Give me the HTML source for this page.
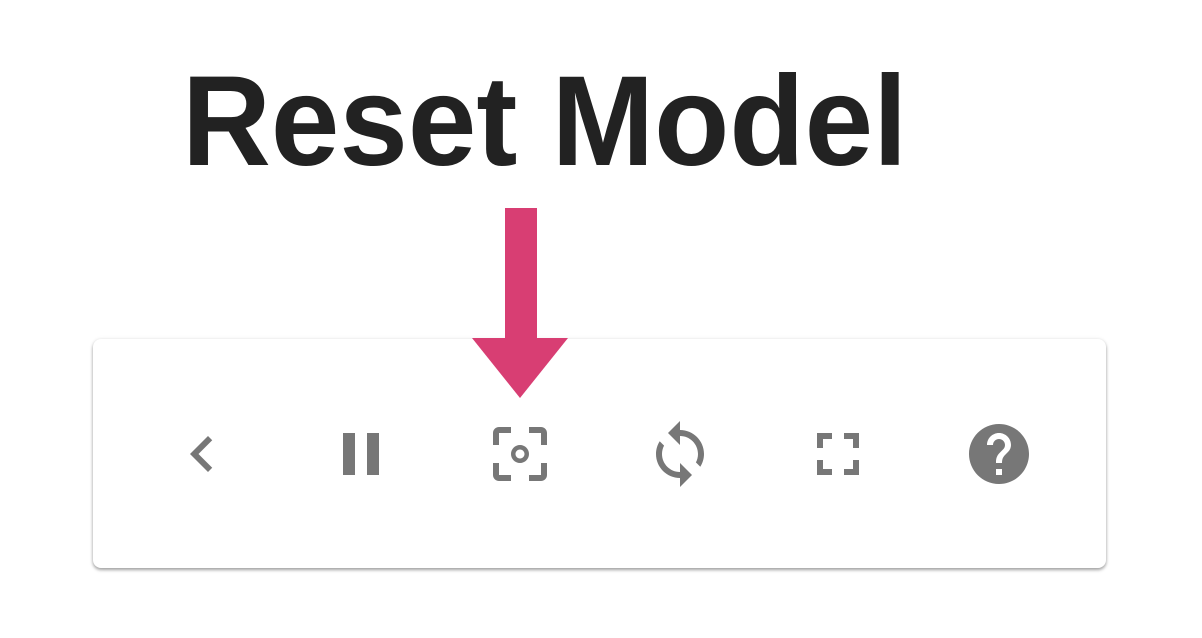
<!DOCTYPE html><html><head><style>
body{margin:0;width:1202px;height:638px;background:#fff;position:relative;overflow:hidden;font-family:"Liberation Sans",sans-serif}
.t{position:absolute;left:182px;top:45px;font-size:128px;font-weight:bold;color:#222;transform:scaleX(0.962);transform-origin:left top;line-height:1.2;white-space:nowrap}
.card{position:absolute;left:93px;top:339px;width:1013px;height:229px;border-radius:8px;background:#fff;box-shadow:0 2px 3px rgba(0,0,0,.35),0 0 4px rgba(0,0,0,.08)}
svg.i{position:absolute;top:418px;width:72px;height:72px;fill:#777}
</style></head><body>
<div class="t">Reset Model</div>
<div class="card"></div>
<svg width="1202" height="638" style="position:absolute;left:0;top:0">
<rect x="505" y="208" width="32" height="135" fill="#d83e73"/>
<polygon points="472,338 568,338 520,398" fill="#d83e73"/>
</svg>
<svg class="i" style="left:166px" viewBox="0 0 24 24"><path d="M15.41 7.41L14 6l-6 6 6 6 1.41-1.41L10.83 12z"/></svg>
<svg class="i" style="left:325px" viewBox="0 0 24 24"><path d="M6 19h4V5H6v14zm8-14v14h4V5h-4z"/></svg>
<svg class="i" style="left:484px" viewBox="0 0 24 24"><path d="M5 15H3v4c0 1.1.9 2 2 2h4v-2H5v-4zM5 5h4V3H5c-1.1 0-2 .9-2 2v4h2V5zm14-2h-4v2h4v4h2V5c0-1.1-.9-2-2-2zm0 16h-4v2h4c1.1 0 2-.9 2-2v-4h-2v4zM12 9c-1.66 0-3 1.34-3 3s1.34 3 3 3 3-1.34 3-3-1.34-3-3-3zm0 4.5c-.83 0-1.5-.67-1.5-1.5s.67-1.5 1.5-1.5 1.5.67 1.5 1.5-.67 1.5-1.5 1.5z"/></svg>
<svg class="i" style="left:644px" viewBox="0 0 24 24"><path d="M12 4V1L8 5l4 4V6c3.31 0 6 2.69 6 6 0 1.01-.25 1.97-.7 2.8l1.46 1.46C19.54 15.03 20 13.57 20 12c0-4.42-3.58-8-8-8zm0 14c-3.31 0-6-2.69-6-6 0-1.01.25-1.97.7-2.8L5.24 7.74C4.46 8.97 4 10.43 4 12c0 4.42 3.58 8 8 8v3l4-4-4-4v3z"/></svg>
<svg class="i" style="left:802px" viewBox="0 0 24 24"><path d="M7 14H5v5h5v-2H7v-3zm-2-4h2V7h3V5H5v5zm12 7h-3v2h5v-5h-2v3zM14 5v2h3v3h2V5h-5z"/></svg>
<svg class="i" style="left:963px" viewBox="0 0 24 24"><path d="M12 2C6.48 2 2 6.48 2 12s4.48 10 10 10 10-4.48 10-10S17.52 2 12 2zm1 17h-2v-2h2v2zm2.07-7.75l-.9.92C13.45 12.9 13 13.5 13 15h-2v-.5c0-1.1.45-2.1 1.17-2.83l1.24-1.26c.37-.36.59-.86.59-1.41 0-1.1-.9-2-2-2s-2 .9-2 2H8c0-2.21 1.79-4 4-4s4 1.79 4 4c0 .88-.36 1.68-.93 2.25z"/></svg>
</body></html>
